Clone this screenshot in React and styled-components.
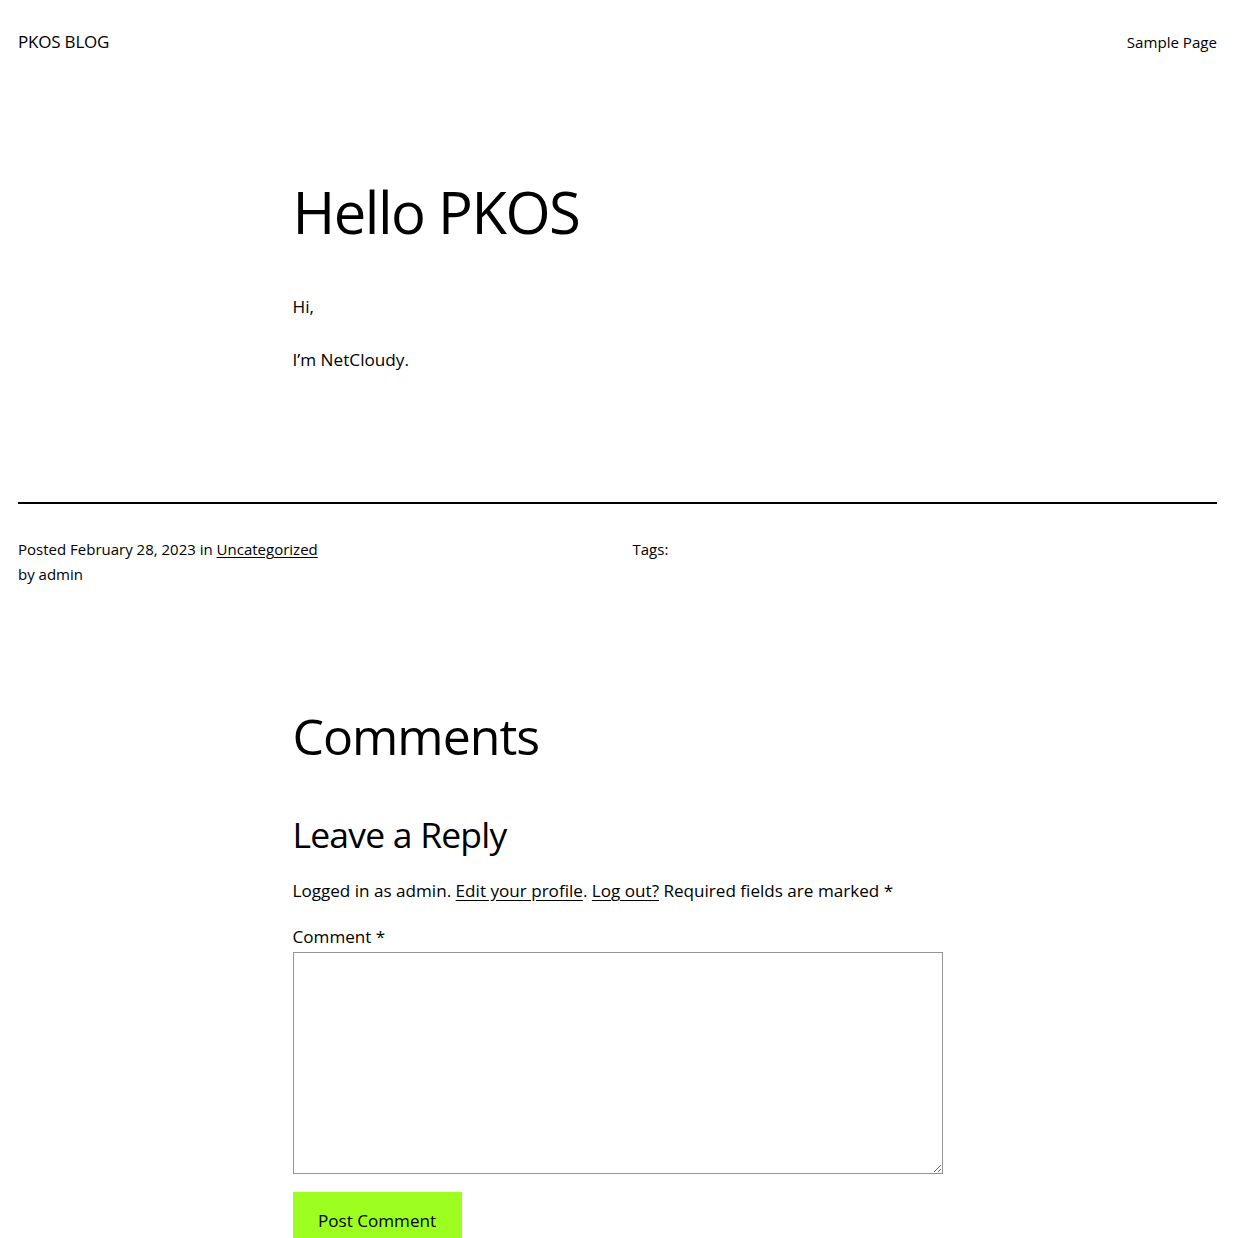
import React from "react";
import styled, { createGlobalStyle } from "styled-components";

const Global = createGlobalStyle`
  html, body { margin: 0; padding: 0; background: #fff; }
  body { font-family: "Open Sans", "Noto Sans", sans-serif; color: #000; }
  * { box-sizing: border-box; }
`;

const Page = styled.div`
  padding: 0 28px 0 18px;
`;

const Header = styled.header`
  display: flex;
  justify-content: space-between;
  align-items: center;
  height: 83px;
`;

const SiteTitle = styled.div`
  font-size: 17px;
  letter-spacing: -0.2px;
`;

const NavLink = styled.a`
  font-size: 15.1px;
  color: #000;
  text-decoration: none;
`;

const Column = styled.div`
  width: 650px;
  margin: 0 auto;
`;

const Title = styled.h1`
  font-weight: 400;
  font-size: 58px;
  letter-spacing: -1.5px;
  line-height: 1.1;
  margin: 97px 0 0;
`;

const Para = styled.p`
  font-size: 17.2px;
  line-height: 1.6;
  margin: ${p => p.$top || 0}px 0 0;
`;

const Separator = styled.hr`
  border: none;
  border-top: 2px solid #000;
  margin: 129px 0 0;
`;

const Meta = styled.div`
  display: grid;
  grid-template-columns: 1fr 1fr;
  column-gap: 30px;
  margin-top: 33px;
  font-size: 15px;
  line-height: 25px;
`;

const MetaLink = styled.a`
  color: #000;
  text-decoration: underline;
  text-underline-offset: 2px;
`;

const CommentsTitle = styled.h2`
  font-weight: 400;
  font-size: 50px;
  letter-spacing: -1px;
  line-height: 1.1;
  margin: 122px 0 0;
`;

const ReplyTitle = styled.h3`
  font-weight: 400;
  font-size: 35.5px;
  letter-spacing: -0.8px;
  line-height: 1.2;
  margin: 49px 0 0;
`;

const Logged = styled.p`
  font-size: 17.1px;
  line-height: 1.6;
  margin: 21px 0 0;
`;

const TextLink = styled.a`
  color: #000;
  text-decoration: underline;
  text-underline-offset: 3px;
`;

const Label = styled.label`
  display: block;
  font-size: 17.1px;
  line-height: 1.6;
  margin-top: 19px;
`;

const TextArea = styled.textarea`
  display: block;
  width: 650px;
  height: 222px;
  border: 1px solid #949494;
  margin: 1px 0 0;
  resize: vertical;
  font-family: inherit;
`;

const Button = styled.button`
  margin-top: 18px;
  background: #9dff20;
  border: none;
  font-family: inherit;
  font-size: 17.1px;
  color: #000;
  width: 169px;
  height: 58px;
  padding: 0;
`;

export default function App() {
  return (
    <>
      <Global />
      <Page>
        <Header>
          <SiteTitle>PKOS BLOG</SiteTitle>
          <NavLink href="#">Sample Page</NavLink>
        </Header>
        <Column>
          <Title>Hello PKOS</Title>
          <Para $top={49}>Hi,</Para>
          <Para $top={25.5}>I’m NetCloudy.</Para>
        </Column>
        <Separator />
        <Meta>
          <div>
            Posted February 28, 2023 in <MetaLink href="#">Uncategorized</MetaLink>
            <br />
            by admin
          </div>
          <div>Tags:</div>
        </Meta>
        <Column>
          <CommentsTitle>Comments</CommentsTitle>
          <ReplyTitle>Leave a Reply</ReplyTitle>
          <Logged>
            Logged in as admin. <TextLink href="#">Edit your profile</TextLink>.{" "}
            <TextLink href="#">Log out?</TextLink> Required fields are marked *
          </Logged>
          <Label>Comment *</Label>
          <TextArea />
          <Button>Post Comment</Button>
        </Column>
      </Page>
    </>
  );
}
